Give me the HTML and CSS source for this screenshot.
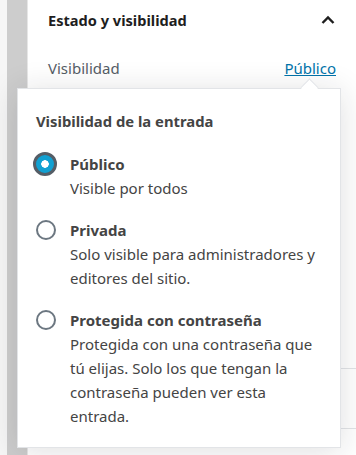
FILE: index.html
```html
<!DOCTYPE html>
<html>
<head>
  <title>Estado y visibilidad</title>
  <link rel="stylesheet" href="styles.css">
</head>
<body>
  <div class="frame">
    <div class="gutter"></div>
    <div class="scrollbar"></div>
    <div class="sidebar">
      <div class="panel panel-status">
        <div class="panel-header">
          <span class="panel-title">Estado y visibilidad</span>
          <svg class="chevron" width="16" height="16" viewBox="0 0 16 16">
            <path d="M2.5 11 L8 5.5 L13.5 11" fill="none" stroke="#1e1e1e" stroke-width="2.4"/>
          </svg>
        </div>
        <div class="panel-row">
          <span class="row-label">Visibilidad</span>
          <a class="row-link" href="#">Público</a>
        </div>
      </div>
      <div class="panel panel-next"></div>
      <div class="panel panel-last"></div>
    </div>
  </div>

  <div class="popover">
    <div class="popover-arrow"></div>
    <h2 class="popover-title">Visibilidad de la entrada</h2>
    <div class="option">
      <div class="radio-box"><span class="radio checked"></span></div>
      <div class="option-text">
        <div class="option-label">Público</div>
        <div class="option-desc">Visible por todos</div>
      </div>
    </div>
    <div class="option">
      <div class="radio-box"><span class="radio"></span></div>
      <div class="option-text">
        <div class="option-label">Privada</div>
        <div class="option-desc">Solo visible para administradores y editores del sitio.</div>
      </div>
    </div>
    <div class="option">
      <div class="radio-box"><span class="radio"></span></div>
      <div class="option-text">
        <div class="option-label">Protegida con contraseña</div>
        <div class="option-desc">Protegida con una contraseña que tú elijas. Solo los que tengan la contraseña pueden ver esta entrada.</div>
      </div>
    </div>
  </div>
</body>
</html>
```

FILE: styles.css
```css
body {
    margin: 0;
    padding: 0;
    width: 356px;
    height: 455px;
    overflow: hidden;
    font-family: 'Noto Sans', 'Open Sans', sans-serif;
    font-size: 15px;
    color: #444;
    position: relative;
    background-color: #fff;
}

.frame {
    display: flex;
    height: 455px;
}

.gutter {
    width: 7px;
    background-color: #f6f6f6;
}

.scrollbar {
    width: 20px;
    background-color: #cdcdcd;
    border-right: 1px solid #e6e6e6;
}

.sidebar {
    flex: 1;
    display: flex;
    flex-direction: column;
    background-color: #fff;
}

.panel {
    border-bottom: 1px solid #e2e4e7;
}

.panel-status {
    height: 368px;
}

.panel-next {
    height: 59px;
}

.panel-last {
    flex: 1;
    border-bottom: none;
}

.panel-header {
    display: flex;
    align-items: center;
    justify-content: space-between;
    height: 40px;
    padding: 0 20px;
}

.panel-title {
    font-weight: bold;
    font-size: 14.6px;
    color: #1e1e1e;
}

.chevron {
    display: block;
}

.panel-row {
    display: flex;
    justify-content: space-between;
    align-items: center;
    height: 24px;
    padding: 16px 20px 0 20px;
}

.row-label {
    color: #555d66;
}

.row-link {
    color: #0073aa;
    text-decoration: underline;
}

.popover {
    position: absolute;
    left: 17px;
    top: 88px;
    width: 286px;
    padding: 20px 18px 19px 18px;
    background-color: #fff;
    border: 1px solid #e2e4e7;
    box-shadow: 0 3px 30px rgba(25, 30, 35, 0.14);
}

.popover-arrow {
    position: absolute;
    top: -8px;
    right: 24px;
    width: 12px;
    height: 12px;
    background-color: #fff;
    border-top: 1px solid #e2e4e7;
    border-left: 1px solid #e2e4e7;
    transform: rotate(45deg);
}

.popover-title {
    margin: 0 0 19px 0;
    font-size: 14.8px;
    line-height: 24px;
    font-weight: bold;
    color: #444;
}

.option {
    display: flex;
    align-items: flex-start;
    margin-bottom: 18px;
    line-height: 24px;
}

.option:last-child {
    margin-bottom: 0;
}

.radio-box {
    flex: none;
    width: 34px;
    display: flex;
    align-items: center;
    height: 24px;
}

.radio {
    width: 16px;
    height: 16px;
    border: 2px solid #6c7781;
    border-radius: 50%;
}

.radio.checked {
    width: 18px;
    height: 18px;
    margin-left: -3px;
    border: 3px solid #555d66;
    background-color: #11a0d2;
    background-image: radial-gradient(circle, #fff 0 3.5px, transparent 4px);
}

.option-label {
    font-weight: bold;
    color: #444;
}

.option-desc {
    color: #444;
}
```
